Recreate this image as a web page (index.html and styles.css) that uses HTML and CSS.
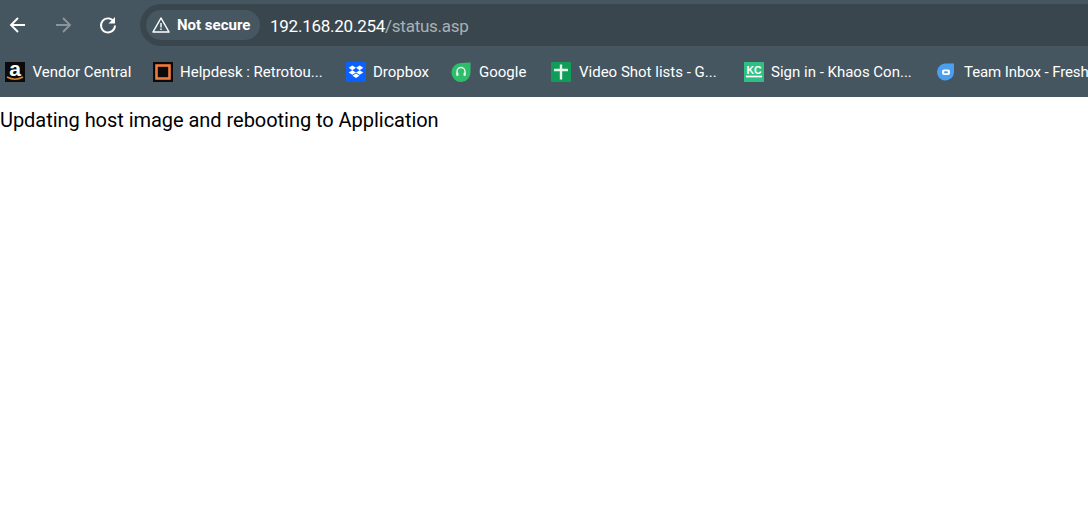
FILE: index.html
```html
<!DOCTYPE html>
<html lang="en">
<head>
<meta charset="utf-8">
<title>status</title>
<link rel="stylesheet" href="styles.css">
</head>
<body>
<header class="chrome">
  <div class="toolbar">
    <nav class="nav">
      <svg class="nav-icon" width="20" height="20" viewBox="0 0 20 20"><path d="M17 10H3.500M10 3 3 10l7 7" fill="none" stroke="#fff" stroke-width="1.900"/></svg>
      <svg class="nav-icon" width="20" height="20" viewBox="0 0 20 20"><path d="M3 10h13.500M10 3l7 7-7 7" fill="none" stroke="#8a959b" stroke-width="1.900"/></svg>
      <svg class="nav-icon" width="20" height="20" viewBox="0 0 20 20"><path d="M15.800 6.500A7 7 0 1 0 17 10.500" fill="none" stroke="#fff" stroke-width="1.900"/><path d="M17 2v6.500h-6.500z" fill="#fff"/></svg>
    </nav>
    <div class="omnibox">
      <div class="chip">
        <svg width="20" height="20" viewBox="0 0 20 20"><path d="M10 3 18 17H2z" fill="none" stroke="#fff" stroke-width="1.500" stroke-linejoin="round"/><path d="M10 8v4.500M10 13.500v1.500" stroke="#fff" stroke-width="1.400"/></svg>
        <span class="chip-text">Not secure</span>
      </div>
      <div class="url"><span class="host">192.168.20.254</span><span class="path">/status.asp</span></div>
    </div>
  </div>
  <div class="bookmarks">
    <a class="bm bm-1">
      <svg class="amz-icon" width="20" height="20" viewBox="0 0 20 20"><rect width="20" height="20" fill="#0b0b0b"/><text x="10" y="14" text-anchor="middle" class="amz">a</text><path d="M2 15q8 4.500 16 0" fill="none" stroke="#d98a2b" stroke-width="1.700"/></svg>
      <span>Vendor Central</span>
    </a>
    <a class="bm bm-2">
      <svg width="20" height="20" viewBox="0 0 20 20"><rect width="20" height="20" fill="#0b0b0b"/><rect x="3.500" y="3.500" width="13" height="13" fill="#0b0b0b" stroke="#ef7a3c" stroke-width="2.600"/></svg>
      <span>Helpdesk : Retrotou...</span>
    </a>
    <a class="bm bm-3">
      <svg width="20" height="20" viewBox="0 0 20 20"><rect width="20" height="20" fill="#0b61ff"/><path d="M6.300 3.500 10 5.800 6.300 8.200 2.700 5.800zM13.700 3.500 17.300 5.800 13.700 8.200 10 5.800zM6.300 8.200 10 10.500 6.300 12.800 2.700 10.500zM13.700 8.200 17.300 10.500 13.700 12.800 10 10.500zM6.500 13.700 10 11.500l3.500 2.200L10 16z" fill="#fff"/></svg>
      <span>Dropbox</span>
    </a>
    <a class="bm bm-4">
      <svg width="20" height="20" viewBox="0 0 20 20"><path d="M10 1 19.500 .5V10A9.500 9.500 0 1 1 10 1z" fill="#2ebd6b"/><path d="M6 11.500V9.500a4 4 0 0 1 8 0v2" fill="none" stroke="#e9f8ef" stroke-width="1.400"/><rect x="5.200" y="10.500" width="2.300" height="3.500" rx="1" fill="#e9f8ef"/><rect x="12.500" y="10.500" width="2.300" height="3.500" rx="1" fill="#e9f8ef"/></svg>
      <span>Google</span>
    </a>
    <a class="bm bm-5">
      <svg width="20" height="20" viewBox="0 0 20 20"><rect width="20" height="20" rx="1" fill="#0f9d58"/><path d="M3 8h14M10 2.500V17.500" stroke="#e6f5ec" stroke-width="2.400"/></svg>
      <span>Video Shot lists - G...</span>
    </a>
    <a class="bm bm-6">
      <svg width="20" height="20" viewBox="0 0 20 20"><rect width="20" height="20" fill="#2fbf85"/><text x="10" y="11.500" text-anchor="middle" class="kc">KC</text><path d="M2 14.500h16" stroke="#fff" stroke-width="1.700"/></svg>
      <span>Sign in - Khaos Con...</span>
    </a>
    <a class="bm bm-7">
      <svg width="20" height="20" viewBox="0 0 20 20"><path d="M10 1.500h8V10.500A8.500 8.500 0 1 1 10 1.500z" fill="#4aa0ef"/><rect x="6" y="7.500" width="8" height="5.500" rx="2" fill="#fff"/><rect x="8" y="9.200" width="4" height="2" rx="1" fill="#4aa0ef"/></svg>
      <span>Team Inbox - Fresh</span>
    </a>
  </div>
</header>
<main class="page">Updating host image and rebooting to Application</main>
</body>
</html>
```

FILE: styles.css
```css
* { box-sizing: border-box; }
html, body { margin: 0; padding: 0; overflow: hidden; }
body {
  width: 1088px;
  height: 512px;
  background: #fff;
  font-family: Roboto, "Noto Sans", sans-serif;
}
.chrome { background: #455660; height: 97px; overflow: hidden; }
.toolbar { display: flex; height: 46px; padding-top: 4px; }
.nav { display: flex; width: 140px; flex: none; align-items: center; padding-left: 8px; gap: 25px; }
.nav-icon { flex: none; }
.omnibox {
  flex: 1;
  margin-right: -40px;
  height: 42px;
  background: #3a464d;
  border-radius: 21px 0 0 21px;
  display: flex;
  align-items: center;
  padding-left: 6px;
}
.chip {
  width: 114px;
  height: 30px;
  border-radius: 15px;
  background: #465761;
  display: flex;
  align-items: center;
  padding-left: 5px;
  gap: 6px;
  color: #fff;
}
.chip-text { font-size: 15px; font-weight: 700; white-space: nowrap; }
.url { margin-left: 10px; padding-top: 1px; font-size: 17px; letter-spacing: -0.25px; white-space: nowrap; }
.host { color: #fff; }
.path { color: #a9b1b6; }
.bookmarks { display: flex; height: 51px; align-items: center; white-space: nowrap; }
.bm { display: flex; flex: none; align-items: center; color: #fff; font-size: 15px; gap: 8px; }
.bm svg { flex: none; }
.bm-1 { margin-left: 5px; width: 148px; gap: 7.500px; }
.bm-2 { width: 193px; gap: 7px; }
.bm-3 { width: 105px; gap: 7px; }
.bm-4 { width: 100px; }
.bm-5 { width: 193px; }
.bm-6 { width: 192px; gap: 7px; }
.bm-7 { width: 152px; letter-spacing: -0.1px; }
.amz-icon { overflow: visible; }
.amz { font: 700 21px "Liberation Sans", sans-serif; fill: #fff; }
.kc { font: 700 10.500px "Liberation Sans", sans-serif; fill: #fff; }
.page { font-size: 20px; letter-spacing: -0.04px; line-height: 26px; color: #000; padding-top: 10px; white-space: nowrap; }
```
